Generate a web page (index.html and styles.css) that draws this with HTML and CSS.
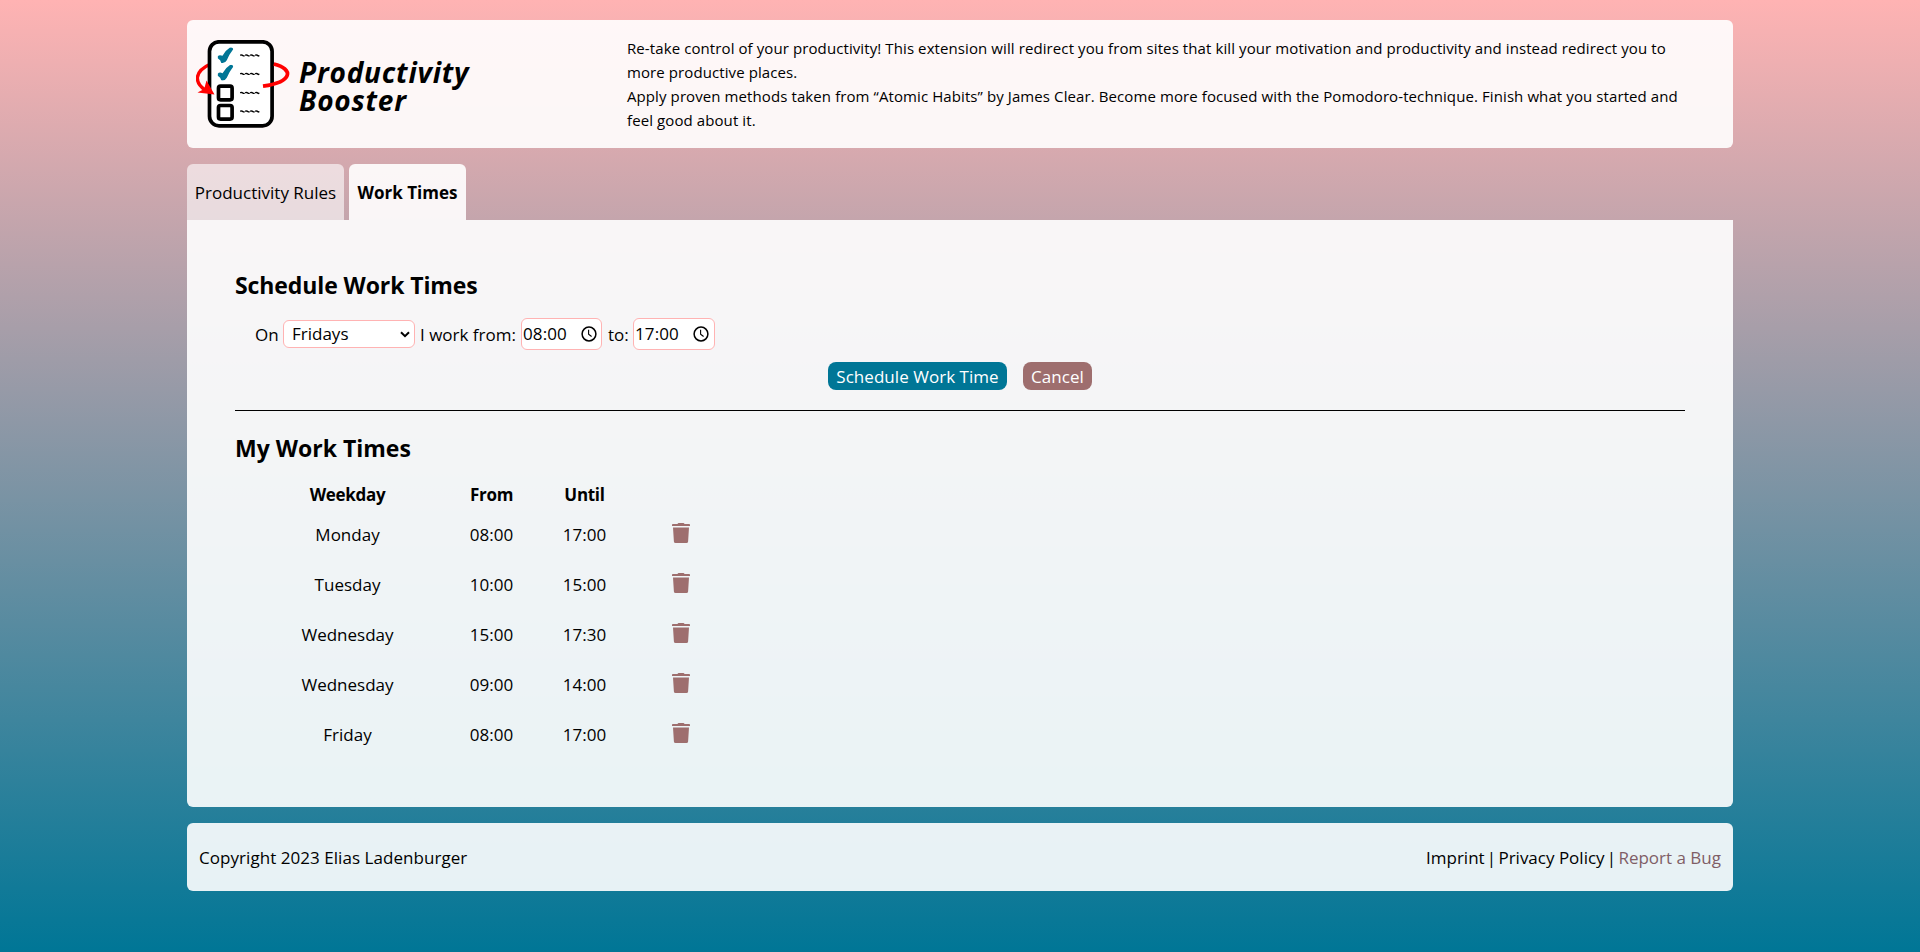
FILE: index.html
```html
<!DOCTYPE html>
<html lang="en">
<head>
<meta charset="utf-8">
<title>Productivity Booster</title>
<link rel="stylesheet" href="styles.css">
</head>
<body>
<svg class="defs" aria-hidden="true">
  <symbol id="trash" viewBox="0 0 18 20"><path d="M5.500 .9Q5.800 0 6.700 0h4.600q.9 0 1.200.9h4.600q.9 0 .9.9v1.200H0v-1.200q0-.9.9-.9zM1 4.600h16l-.9 13.800q-.1 1.600-1.700 1.600H3.600q-1.600 0-1.700-1.600z" fill="#9e6e6e"/></symbol>
  <symbol id="clock" viewBox="0 0 16 16"><circle cx="8" cy="8" r="6.900" fill="none" stroke="#000" stroke-width="1.500"/><path d="M7.600 3.800V8.200l3 2.300" fill="none" stroke="#000" stroke-width="1.100"/></symbol>
  <symbol id="check" viewBox="0 0 16 16"><path d="M.2 9Q2 7 5 8.500 8 3 12.500.3q3-.8 3.200 1.700Q11.800 7 9.300 13 7.500 16.400 3.800 15.600 3.300 12.500.2 11z" fill="#007696"/></symbol>
  <symbol id="squiggle" viewBox="0 0 20 4"><path d="M.3 1.600l1.700-.2 1.500 1 1.400 0M5.300 1.600l1.700-.2 1.500 1 1.400 0M10.300 1.600l1.700-.2 1.500 1 1.400 0M15.300 1.600l1.700-.2 1.500 1 1.200-.3" fill="none" stroke="#000" stroke-width="1.400"/></symbol>
</svg>
<div class="page">
  <header class="card header">
    <div class="brand">
      <svg class="logo" viewBox="0 0 96 90">
        <path d="M14.500 24C-3 32-1 43 9 50" fill="none" stroke="#f00" stroke-width="3.400"/>
        <rect x="13.500" y="1.800" width="62.600" height="84" rx="9.500" fill="#fff" stroke="#000" stroke-width="3.700"/>
        <path d="M77.800 24C98 29 97 42 67 46.200" fill="none" stroke="#f00" stroke-width="3.700"/>
        <path d="M10.500 40.500L18.500 54.500 1.500 52.500 8.200 49z" fill="#f00"/>
        <use href="#check" x="21.500" y="7.300" width="16" height="16"/>
        <use href="#check" x="21.500" y="24.700" width="16" height="16"/>
        <rect x="22.500" y="46.200" width="13.600" height="13.600" rx="2" fill="#fff" stroke="#000" stroke-width="3.700"/>
        <rect x="22.500" y="65.500" width="13.600" height="13.600" rx="2" fill="#fff" stroke="#000" stroke-width="3.700"/>
        <use href="#squiggle" x="43.800" y="13.500" width="20" height="4"/>
        <use href="#squiggle" x="43.800" y="32" width="20" height="4"/>
        <use href="#squiggle" x="43.800" y="51" width="20" height="4"/>
        <use href="#squiggle" x="43.800" y="69.500" width="20" height="4"/>
      </svg>
      <h1 class="title">Productivity<br>Booster</h1>
    </div>
    <p class="intro">Re-take control of your productivity! This extension will redirect you from sites that kill your motivation and productivity and instead redirect you to<br>more productive places.<br>Apply proven methods taken from “Atomic Habits” by James Clear. Become more focused with the Pomodoro-technique. Finish what you started and<br>feel good about it.</p>
  </header>
  <nav class="tabs">
    <a class="tab">Productivity Rules</a>
    <a class="tab active">Work Times</a>
  </nav>
  <main class="panel">
    <h2 class="heading">Schedule Work Times</h2>
    <div class="form-row">
      <span class="w-on">On</span>
      <span class="field select">Fridays<svg class="chevron" viewBox="0 0 10 7"><path d="M1 1.200l4 4 4-4" fill="none" stroke="#000" stroke-width="2"/></svg></span>
      <span class="w-from">I work from:</span>
      <span class="field time">08:00<svg class="clock"><use href="#clock"/></svg></span>
      <span class="w-to">to:</span>
      <span class="field time last">17:00<svg class="clock"><use href="#clock"/></svg></span>
    </div>
    <div class="buttons">
      <button class="btn primary">Schedule Work Time</button>
      <button class="btn cancel">Cancel</button>
    </div>
    <hr class="rule">
    <h2 class="heading second">My Work Times</h2>
    <div class="times">
      <div class="row head"><span>Weekday</span><span>From</span><span>Until</span><span></span></div>
      <div class="row"><span>Monday</span><span>08:00</span><span>17:00</span><svg class="trash"><use href="#trash"/></svg></div>
      <div class="row"><span>Tuesday</span><span>10:00</span><span>15:00</span><svg class="trash"><use href="#trash"/></svg></div>
      <div class="row"><span>Wednesday</span><span>15:00</span><span>17:30</span><svg class="trash"><use href="#trash"/></svg></div>
      <div class="row"><span>Wednesday</span><span>09:00</span><span>14:00</span><svg class="trash"><use href="#trash"/></svg></div>
      <div class="row"><span>Friday</span><span>08:00</span><span>17:00</span><svg class="trash"><use href="#trash"/></svg></div>
    </div>
  </main>
  <footer class="card footer">
    <span class="copy">Copyright 2023 Elias Ladenburger</span>
    <span class="links">Imprint <span class="sep">|</span> Privacy Policy <span class="sep">|</span> <a class="bug">Report a Bug</a></span>
  </footer>
</div>
</body>
</html>
```
FILE: styles.css
```css
* { box-sizing: border-box; }
body {
  margin: 0;
  height: 952px;
  background: linear-gradient(#ffb3b3, #007696);
  font: 17px/24px "Open Sans", "Noto Sans", sans-serif;
  color: #000;
  white-space: nowrap;
}
.defs { display: none; }
.page { width: 1546px; margin: 0 auto; padding-top: 20px; }
.card { background: rgba(255, 255, 255, .9); border-radius: 6px; }
.header { height: 128px; display: flex; }
.brand { width: 440px; display: flex; padding: 20px 0 0 9px; }
.logo { width: 96px; height: 90px; }
.title { margin: 18px 0 0 7px; font-size: 28px; line-height: 28px; font-style: italic; font-weight: 700; letter-spacing: 0.8px; }
.intro { margin: 16px 0 0; font-size: 15px; line-height: 24px; letter-spacing: 0.095px; }
.tabs { display: flex; gap: 5px; margin-top: 16px; height: 56px; }
.tab { width: 157px; text-align: center; line-height: 58px; background: rgba(255, 255, 255, .6); border-radius: 6px 6px 0 0; }
.tab.active { width: 117px; background: rgba(255, 255, 255, .9); font-weight: 700; }
.panel { height: 587px; padding: 49px 48px 0; background: rgba(255, 255, 255, .9); border-radius: 0 0 6px 6px; }
.heading { margin: 0; font-size: 23px; line-height: 32px; font-weight: 700; letter-spacing: -0.1px; }
.form-row { display: flex; align-items: center; height: 32px; margin-top: 17px; padding-left: 20px; line-height: 26px; }
.w-on { width: 28px; padding-top: 1px; }
.w-from { width: 106px; padding: 1px 0 0 5px; }
.w-to { width: 31px; padding: 1px 0 0 6px; }
.field { display: flex; align-items: center; justify-content: space-between; background: #fff; border: 1px solid #ffb3b3; border-radius: 6px; line-height: 28px; }
.select { width: 132px; height: 28px; padding: 0 4px 0 8px; }
.chevron { width: 10px; height: 7px; }
.time { width: 81px; height: 32px; padding: 0 4px 0 1px; letter-spacing: 0.1px; }
.time.last { width: 82px; padding-right: 5px; }
.clock { width: 16px; height: 16px; }
.buttons { display: flex; justify-content: center; gap: 16px; margin-top: 12px; }
.btn { height: 28px; padding: 1px 0 0; border: 0; border-radius: 8px; font: inherit; letter-spacing: 0.04px; color: #fff; }
.primary { width: 179px; background: #007696; }
.cancel { width: 69px; background: #9e6e6e; }
.rule { margin: 20px 0 0; border: 0; height: 1px; background: #000; }
.second { margin-top: 21px; letter-spacing: 0; }
.times { margin: 16px 0 0 20.5px; }
.row { display: grid; grid-template-columns: 184px 104px 82px 110px; height: 50px; line-height: 30px; text-align: center; }
.row.head { height: 40px; font-weight: 700; letter-spacing: -0.3px; }
.trash { width: 18px; height: 20px; margin: 3px auto 0; }
.footer { display: flex; justify-content: space-between; height: 68px; margin-top: 16px; padding: 0 12px; line-height: 70px; }
.copy { letter-spacing: 0.05px; }
.sep { margin: 0 -2.2px; }
.bug { color: #805e66; }
```
